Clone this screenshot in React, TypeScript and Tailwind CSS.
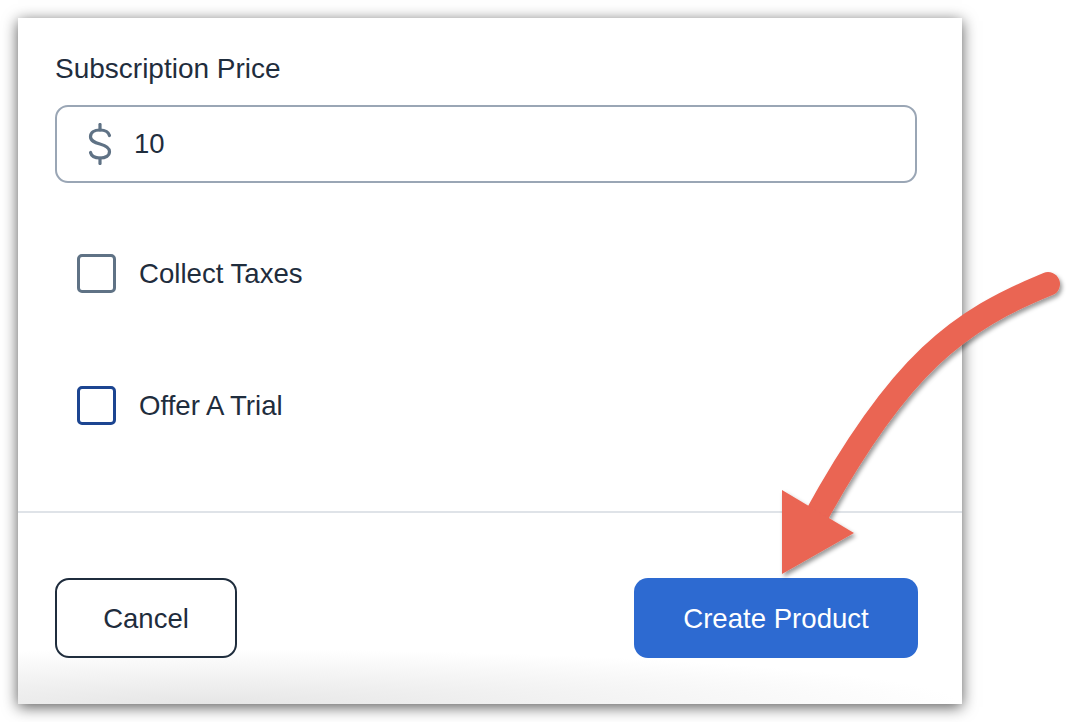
import React from "react";

function DollarIcon() {
  return (
    <svg width="26" height="42" viewBox="0 0 26 42" fill="none" stroke="#5f7285" strokeWidth="3.2" strokeLinecap="round">
      <path d="M13 1.5 V7" />
      <path d="M22.5 12.5 C21.5 9 18 7 13 7 C7 7 3.5 9.8 3.5 13.8 C3.5 18 7.5 19.5 13 21 C18.5 22.5 22.5 24.3 22.5 28.6 C22.5 32.6 18.8 35 13 35 C7.8 35 4.4 33 3.5 29.5" />
      <path d="M13 35 V40.5" />
    </svg>
  );
}

function Check({ color, label }: { color: string; label: string }) {
  return (
    <div className="flex items-center gap-[23px] pl-[22px]">
      <div
        className={`w-[39px] h-[39px] rounded-[5px] border-[3px] ${color}`}
      />
      <span className="text-[27.6px] leading-[32px] text-[#1f2d3d]">{label}</span>
    </div>
  );
}

export default function App() {
  return (
    <div
      className="relative w-[1084px] h-[722px] bg-white overflow-hidden pl-[18px] pt-[18px]"
      style={{ fontFamily: '"Liberation Sans", Arial, sans-serif' }}
    >
      <div className="w-[944px] h-[686px] flex flex-col shadow-[0_3px_14px_rgba(0,0,0,0.65)] bg-[radial-gradient(80%_55px_at_20%_100%,#e6e6e6,#ffffff)]">
        <div className="pl-[37px] pt-[35px] flex flex-col">
          <div className="text-[28px] leading-[32px] text-[#1f2d3d]">Subscription Price</div>
          <div className="mt-[20px] w-[862px] h-[78px] border-2 border-[#9aa6b5] rounded-[13px] flex items-center pl-[30px] gap-[21px]">
            <DollarIcon />
            <span className="text-[27.5px] leading-[32px] text-[#1f2d3d]">10</span>
          </div>
          <div className="mt-[71px]">
            <Check color="border-[#5f7285]" label="Collect Taxes" />
          </div>
          <div className="mt-[93px]">
            <Check color="border-[#1c4591]" label="Offer A Trial" />
          </div>
        </div>
        <div className="mt-[86px] h-[2px] bg-[#dfe3e8]" />
        <div className="mt-[65px] pl-[37px] pr-[44px] flex justify-between">
          <button className="w-[182px] h-[80px] rounded-[14px] border-2 border-[#1f2d3d] text-[27.5px] leading-[32px] pt-[1px] text-[#1f2d3d] bg-transparent">
            Cancel
          </button>
          <button className="w-[284px] h-[80px] rounded-[14px] bg-[#2d6ad1] text-[27.6px] leading-[32px] pt-[1px] text-white">
            Create Product
          </button>
        </div>
      </div>

      <svg
        className="absolute left-0 top-0 pointer-events-none"
        width="1084"
        height="722"
        viewBox="0 0 1084 722"
      >
        <defs>
          <filter id="ds" x="-20%" y="-20%" width="140%" height="140%">
            <feDropShadow dx="2" dy="3" stdDeviation="2" floodColor="#000" floodOpacity="0.4" />
          </filter>
        </defs>
        <g filter="url(#ds)">
          <path
            d="M1048 284 C 960 320, 900 362, 814 520"
            fill="none"
            stroke="#ea6553"
            strokeWidth="24"
            strokeLinecap="round"
          />
          <polygon points="782,490 854,533 782,574" fill="#ea6553" />
        </g>
      </svg>
    </div>
  );
}
